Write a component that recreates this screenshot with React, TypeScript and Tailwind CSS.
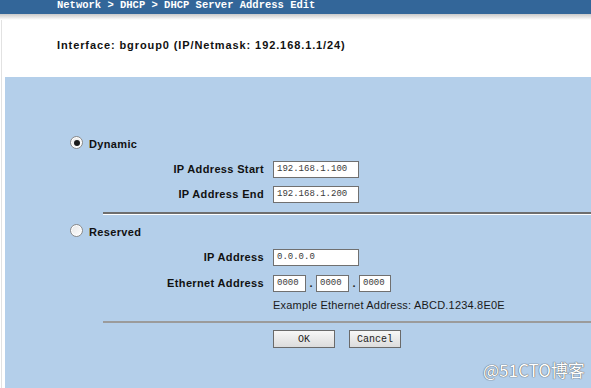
import React from 'react';

// DHCP Server Address Edit — router admin form, classic web UI look.

const labelFont = {fontFamily: '"Liberation Sans", Arial, sans-serif'};
const monoFont = {fontFamily: '"Liberation Mono", "Courier New", monospace'};

function Radio({checked}: {checked?: boolean}) {
  return (
    <span className="flex h-[13px] w-[13px] items-center justify-center rounded-full border border-[#8a8a8a] bg-gradient-to-br from-[#e6e6e6] to-white shadow-[inset_0_0_0_1px_#fff]">
      {checked && <span className="h-[6px] w-[6px] rounded-full bg-[#1a1a1a]" />}
    </span>
  );
}

function Field({value, w}: {value: string; w: string}) {
  return (
    <div
      className={`flex h-[17px] items-center border border-[#707070] bg-white pl-[3px] text-[9px] text-[#3a3a3a] ${w}`}
      style={monoFont}
    >
      {value}
    </div>
  );
}

function Row({label, children, className}: {label: string; children: React.ReactNode; className: string}) {
  return (
    <div className={`flex h-[17px] items-center ${className}`}>
      <span
        className="w-[259px] text-right text-[11px] font-bold tracking-[0.35px] text-[#111]"
        style={labelFont}
      >
        {label}
      </span>
      <div className="ml-[9px] flex items-center">{children}</div>
    </div>
  );
}

function Separator({className}: {className: string}) {
  return <div className={`ml-[98px] border-b border-white ${className}`} />;
}

function Button({children, w}: {children: React.ReactNode; w: string}) {
  return (
    <div
      className={`flex h-[18px] items-center justify-center border border-[#6a6a6a] bg-gradient-to-b from-[#f7f7f7] to-[#dcdcdc] text-[10px] text-[#222] ${w}`}
      style={monoFont}
    >
      {children}
    </div>
  );
}

export default function App() {
  return (
    <div className="relative flex h-[388px] w-[591px] flex-col overflow-hidden bg-white">
      {/* breadcrumb bar */}
      <header className="h-[14px] overflow-hidden bg-[#336699] pl-[57px]">
        <p
          className="-mt-[2px] text-[10.5px] font-bold leading-[14px] text-white"
          style={monoFont}
        >
          Network &gt; DHCP &gt; DHCP Server Address Edit
        </p>
      </header>
      <div className="h-[6px] bg-gradient-to-b from-[#c9c9c9] to-white" />

      <div className="ml-px flex flex-1 flex-col border-l border-[#e2e2e2] pl-[3px]">
        <p
          className="ml-[52px] mt-[19px] text-[11px] font-bold leading-[13px] tracking-[0.9px] text-[#111]"
          style={labelFont}
        >
          Interface: bgroup0 (IP/Netmask: 192.168.1.1/24)
        </p>

        <section className="mt-[25px] flex flex-1 flex-col bg-[#b4cfea] pt-[59px]">
          <div className="flex h-[13px] items-center gap-[6px] pl-[65px]">
            <Radio checked />
            <span className="mt-[4px] text-[11px] font-bold tracking-[0.35px] text-[#111]" style={labelFont}>
              Dynamic
            </span>
          </div>

          <Row label="IP Address Start" className="mt-[12px]">
            <Field value="192.168.1.100" w="w-[86px]" />
          </Row>
          <Row label="IP Address End" className="mt-[8px]">
            <Field value="192.168.1.200" w="w-[86px]" />
          </Row>

          <Separator className="mt-[9px] border-t-2 border-t-[#6e6e6e]" />

          <div className="mt-[9px] flex h-[13px] items-center gap-[6px] pl-[65px]">
            <Radio />
            <span className="mt-[4px] text-[11px] font-bold tracking-[0.35px] text-[#111]" style={labelFont}>
              Reserved
            </span>
          </div>

          <Row label="IP Address" className="mt-[12px]">
            <Field value="0.0.0.0" w="w-[86px]" />
          </Row>
          <Row label="Ethernet Address" className="mt-[9px]">
            <Field value="0000" w="w-[33px]" />
            <span className="w-[10px] text-center text-[11px] font-bold text-[#222]">.</span>
            <Field value="0000" w="w-[33px]" />
            <span className="w-[10px] text-center text-[11px] font-bold text-[#222]">.</span>
            <Field value="0000" w="w-[32px]" />
          </Row>

          <p
            className="ml-[268px] mt-[7px] text-[11px] leading-[13px] tracking-[0.2px] text-[#1a1a1a]"
            style={labelFont}
          >
            Example Ethernet Address: ABCD.1234.8E0E
          </p>

          <Separator className="mt-[9px] border-t-2 border-t-[#9b9b9b] border-b-0" />

          <div className="ml-[268px] mt-[7px] flex gap-[14px]">
            <Button w="w-[62px]">OK</Button>
            <Button w="w-[52px]">Cancel</Button>
          </div>
        </section>
      </div>

      {/* watermark */}
      <span
        className="absolute left-[483px] top-[357px] text-[17px] text-white [text-shadow:0_0_1px_#555,0_0_1px_#555]"
        style={{fontFamily: '"Noto Sans CJK SC", "Noto Sans", sans-serif'}}
      >
        @51CTO博客
      </span>
    </div>
  );
}
